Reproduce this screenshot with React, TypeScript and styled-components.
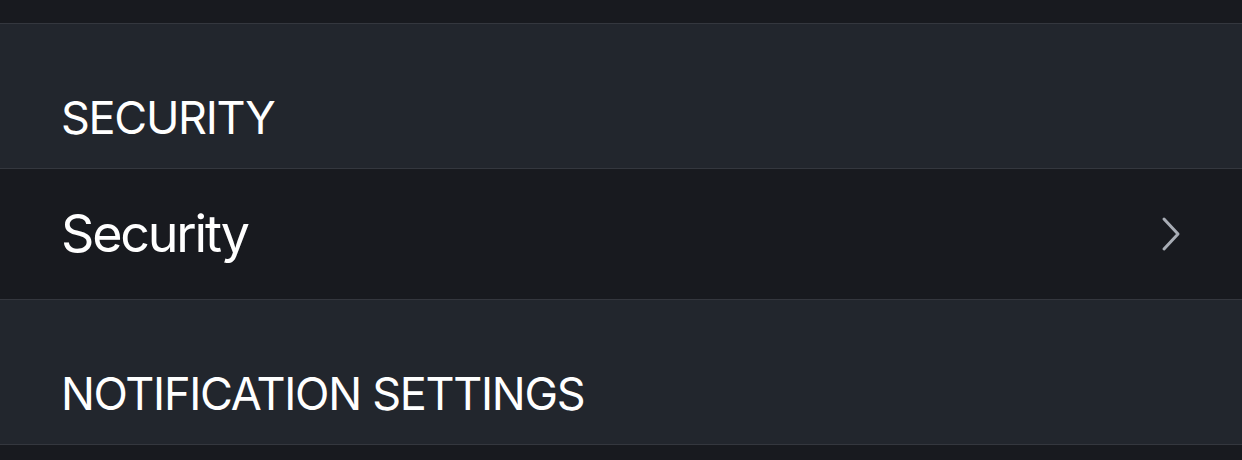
import React from "react";
import styled, { createGlobalStyle } from "styled-components";

const Global = createGlobalStyle`
  html, body { margin: 0; padding: 0; background: #181a1f; }
  body { font-family: Inter, "Noto Sans", "Liberation Sans", sans-serif; -webkit-font-smoothing: antialiased; }
`;

const Page = styled.div`
  width: 1242px;
  height: 460px;
  background: #181a1f;
  display: flex;
  flex-direction: column;
  overflow: hidden;
`;

const TopBand = styled.div`
  height: 23px;
  flex: none;
  border-bottom: 1px solid #34373e;
`;

const SectionHeader = styled.div`
  flex: none;
  background: #22262d;
  border-bottom: 1px solid #34373e;
  display: flex;
  align-items: flex-end;
  padding: 0 0 22px 61px;
  height: 122px;
`;

const HeaderText = styled.span`
  color: #ffffff;
  font-size: 45px;
  line-height: 56px;
  letter-spacing: -1.3px;
  font-weight: 400;
`;

const Row = styled.div`
  height: 130px;
  flex: none;
  background: #181a1f;
  border-bottom: 1px solid #34373e;
  display: flex;
  align-items: center;
  justify-content: space-between;
  padding: 0 58px 0 61px;
`;

const RowLabel = styled.span`
  color: #ffffff;
  font-size: 52px;
  font-weight: 400;
  line-height: 64px;
  letter-spacing: -2.2px;
`;

const Chevron = () => (
  <svg width="24" height="36" viewBox="0 0 24 36" fill="none">
    <path d="M4 3 L18 18 L4 33" stroke="#a8adb5" strokeWidth="3" strokeLinecap="round" strokeLinejoin="round" />
  </svg>
);

export default function App() {
  return (
    <>
      <Global />
      <Page>
        <TopBand />
        <SectionHeader>
          <HeaderText>SECURITY</HeaderText>
        </SectionHeader>
        <Row>
          <RowLabel>Security</RowLabel>
          <Chevron />
        </Row>
        <SectionHeader>
          <HeaderText>NOTIFICATION SETTINGS</HeaderText>
        </SectionHeader>
      </Page>
    </>
  );
}
